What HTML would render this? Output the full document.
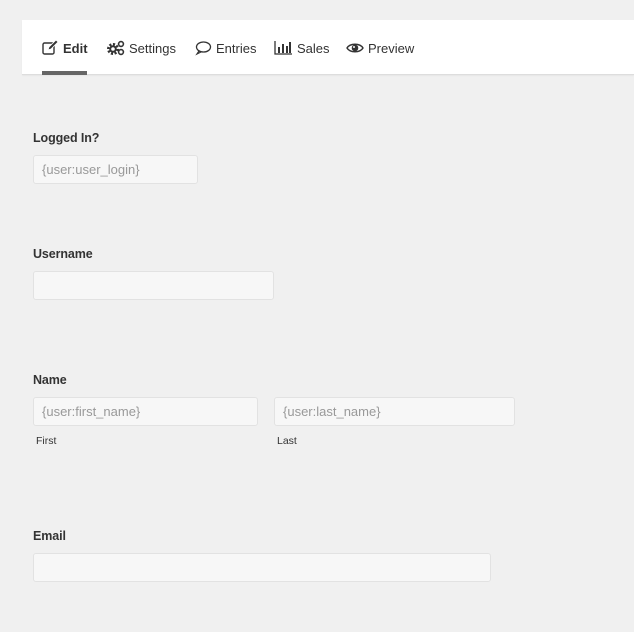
<!DOCTYPE html>
<html><head><meta charset="utf-8"><style>
body{margin:0;width:634px;height:632px;background:#f0f0f0;font-family:"Segoe UI","Liberation Sans",sans-serif;position:relative;overflow:hidden;color:#333}
.bar{position:absolute;left:22px;top:20px;width:612px;height:54px;background:#fff;border-bottom:1px solid #ddd;box-shadow:0 1px 1px rgba(0,0,0,.04)}
.tab{position:absolute;top:40px;font-size:13px;color:#333;display:flex;align-items:center;gap:4px;white-space:nowrap}
.tab svg{display:block}
.ul{position:absolute;left:42px;top:71px;width:45px;height:4px;background:#666}
.lbl{position:absolute;left:33px;font-size:12.5px;font-weight:bold;color:#333;letter-spacing:-0.1px}
.in{position:absolute;background:#f7f7f7;border:1px solid #e2e2e2;border-radius:3px;box-sizing:border-box;height:29px;font-size:13px;color:#999;padding:6px 8px;line-height:15px}
.sub{position:absolute;font-size:10.5px;color:#333}
</style></head><body>
<div class="bar"></div>
<div class="tab" style="left:42px"><svg width="17" height="16" viewBox="0 0 17 16"><rect x="1" y="3" width="11" height="11" rx="1.5" fill="none" stroke="#333" stroke-width="1.4"/><path d="M6 10l1-3 7-7 2 2-7 7z" fill="#333" stroke="#fff" stroke-width=".8"/></svg><b>Edit</b></div>
<div class="ul"></div>
<div class="tab" style="left:107px"><svg width="18" height="16" viewBox="0 0 18 16"><circle cx="6" cy="9" r="4.5" fill="none" stroke="#333" stroke-width="3" stroke-dasharray="2 1.5"/><circle cx="6" cy="9" r="2.8" fill="none" stroke="#333" stroke-width="2"/><circle cx="14" cy="4" r="2.4" fill="none" stroke="#333" stroke-width="1.6"/><circle cx="14" cy="12" r="2.4" fill="none" stroke="#333" stroke-width="1.6"/></svg>Settings</div>
<div class="tab" style="left:195px"><svg width="17" height="16" viewBox="0 0 17 16"><ellipse cx="8.5" cy="7" rx="7" ry="5" fill="none" stroke="#333" stroke-width="1.3"/><path d="M4 11l-2 3 4-2" fill="none" stroke="#333" stroke-width="1.2"/></svg>Entries</div>
<div class="tab" style="left:274px"><svg width="19" height="16" viewBox="0 0 19 16"><path d="M1 1v13h17" fill="none" stroke="#333" stroke-width="1.3"/><rect x="4" y="7" width="2" height="6" fill="#333"/><rect x="8" y="4" width="2" height="9" fill="#333"/><rect x="12" y="6" width="2" height="7" fill="#333"/><rect x="15" y="2" width="2" height="11" fill="#333"/></svg>Sales</div>
<div class="tab" style="left:346px"><svg width="18" height="16" viewBox="0 0 18 16"><path d="M1 8c3-5 13-5 16 0c-3 5-13 5-16 0z" fill="none" stroke="#333" stroke-width="1.4"/><circle cx="9" cy="8" r="3.3" fill="#333"/><circle cx="8" cy="7" r="1" fill="#fff"/></svg>Preview</div>

<div class="lbl" style="top:131px">Logged In?</div>
<div class="in" style="left:33px;top:155px;width:165px">{user:user_login}</div>
<div class="lbl" style="top:247px">Username</div>
<div class="in" style="left:33px;top:271px;width:241px"></div>
<div class="lbl" style="top:373px">Name</div>
<div class="in" style="left:33px;top:397px;width:225px">{user:first_name}</div>
<div class="in" style="left:274px;top:397px;width:241px">{user:last_name}</div>
<div class="sub" style="left:36px;top:435px">First</div>
<div class="sub" style="left:277px;top:435px">Last</div>
<div class="lbl" style="top:529px">Email</div>
<div class="in" style="left:33px;top:553px;width:458px"></div>
</body></html>
